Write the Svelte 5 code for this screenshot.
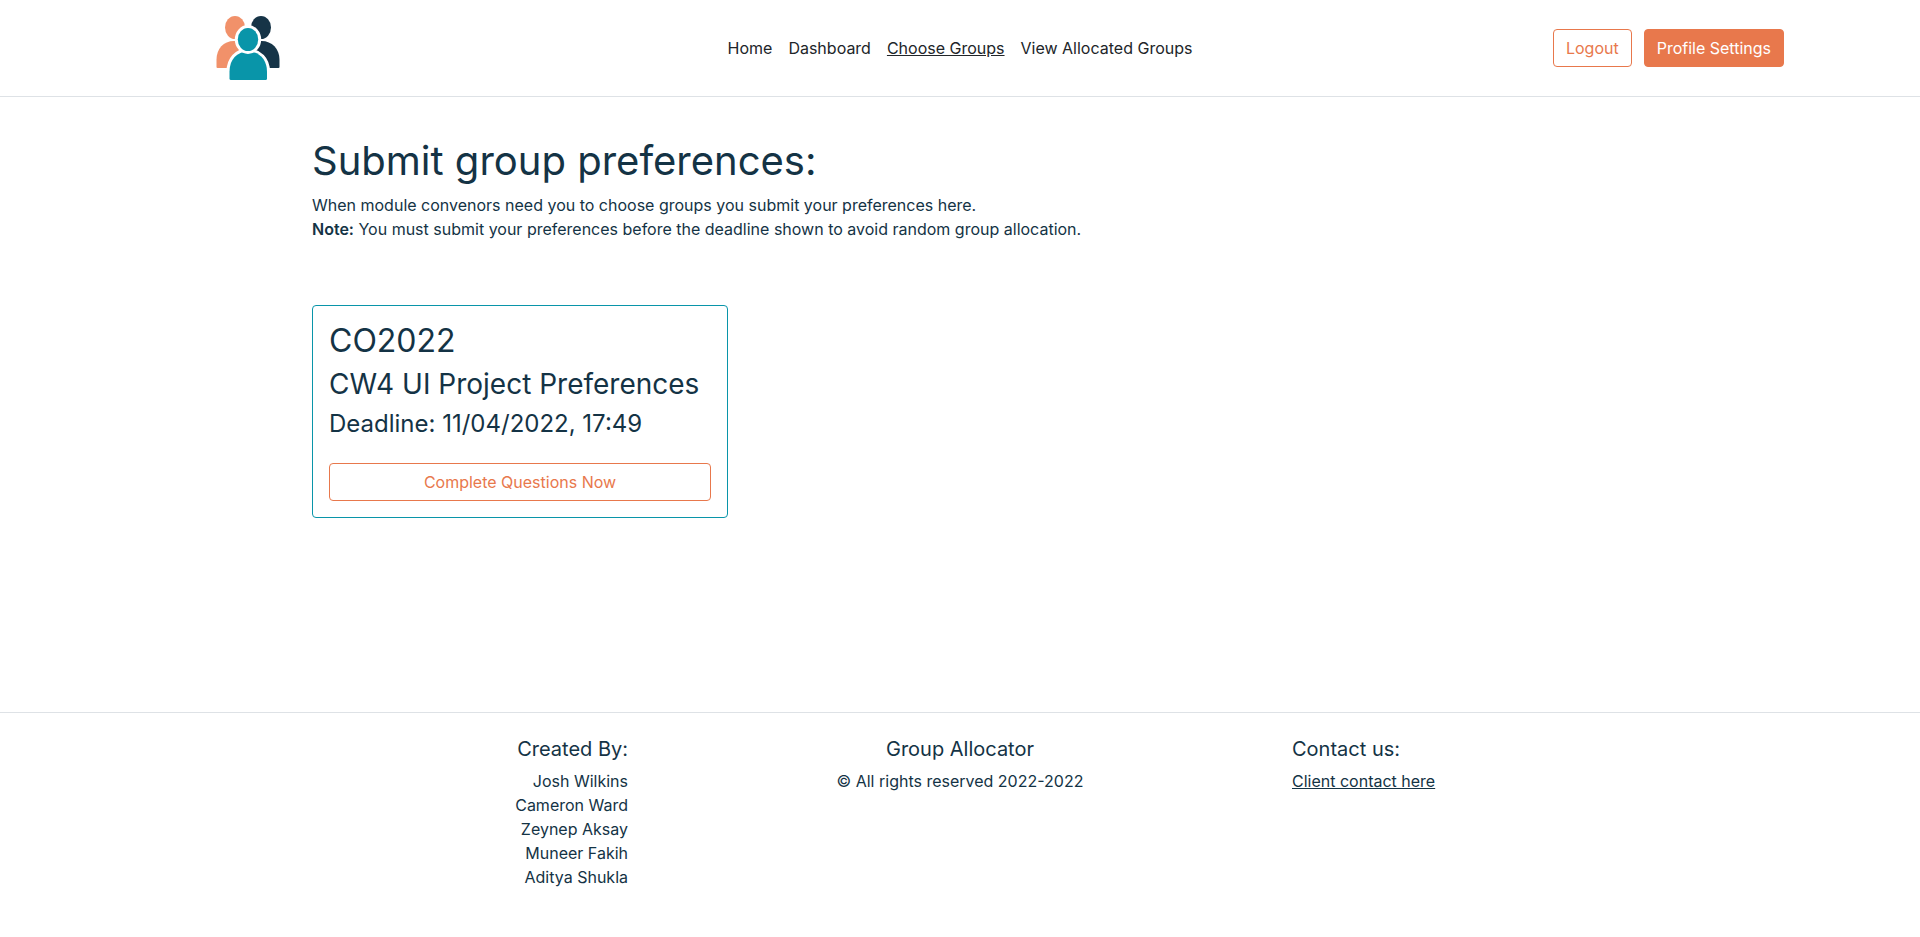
<script>
  const links = [
    { label: 'Home' },
    { label: 'Dashboard' },
    { label: 'Choose Groups', active: true },
    { label: 'View Allocated Groups' }
  ];
  const authors = ['Josh Wilkins', 'Cameron Ward', 'Zeynep Aksay', 'Muneer Fakih', 'Aditya Shukla'];
</script>

<div class="page">
  <header>
    <a class="brand" href="#home" aria-label="Group Allocator">
      <svg width="64" height="64" viewBox="0 0 64 64" aria-hidden="true">
        <g fill="#f1916a">
          <ellipse cx="19" cy="11.5" rx="10" ry="11.5" />
          <path d="M0.500 51V43.500C0.500 33 7.500 25 18 25C28 25 35 33 35 43.500V51a1 1 0 0 1-1 1H1.500a1 1 0 0 1-1-1Z" />
        </g>
        <g fill="#163447">
          <ellipse cx="45" cy="11.500" rx="10" ry="11.500" />
          <path d="M28 51V43.500C28 33 35 25 45.500 25C56 25 63.500 33 63.500 43.500V51a1 1 0 0 1-1 1H29a1 1 0 0 1-1-1Z" />
        </g>
        <g fill="#0995a9" stroke="#fff" stroke-width="6" paint-order="stroke">
          <path d="M13.500 62.500V55.500C13.500 43.500 21 35.500 32 35.500C43 35.500 51 43.500 51 55.500V62.500a1.500 1.500 0 0 1-1.500 1.500H15a1.500 1.500 0 0 1-1.500-1.500Z" />
          <ellipse cx="32" cy="23.500" rx="10.200" ry="11.500" />
        </g>
      </svg>
    </a>
    <nav aria-label="Main">
      {#each links as link}
        <a href="#{link.label}" class:active={link.active} aria-current={link.active ? 'page' : undefined}>{link.label}</a>
      {/each}
    </nav>
    <div class="actions">
      <button class="btn" type="button">Logout</button>
      <button class="btn solid" type="button">Profile Settings</button>
    </div>
  </header>

  <main>
    <h1>Submit group preferences:</h1>
    <p>
      When module convenors need you to choose groups you submit your preferences here.<br />
      <strong>Note:</strong> You must submit your preferences before the deadline shown to avoid random group allocation.
    </p>
    <div class="cards">
      <article class="card">
        <h2>CO2022</h2>
        <h3>CW4 UI Project Preferences</h3>
        <h4>Deadline: 11/04/2022, 17:49</h4>
        <button class="btn" type="button">Complete Questions Now</button>
      </article>
    </div>
  </main>

  <footer>
    <section class="credits">
      <h5>Created By:</h5>
      <ul>
        {#each authors as author}
          <li>{author}</li>
        {/each}
      </ul>
    </section>
    <section class="about">
      <h5>Group Allocator</h5>
      <p>© All rights reserved 2022-2022</p>
    </section>
    <section>
      <h5>Contact us:</h5>
      <a href="#contact">Client contact here</a>
    </section>
  </footer>
</div>

<style>
  :global(body) {
    margin: 0;
    background: #fff;
  }
  .page {
    display: flex;
    flex-direction: column;
    min-height: 100vh;
    font-family: Inter, sans-serif;
    font-size: 16px;
    font-weight: 400;
    line-height: 24px;
    color: #143345;
  }
  .page * {
    box-sizing: border-box;
  }
  header {
    display: grid;
    grid-template-columns: 1fr auto 1fr;
    align-items: center;
    padding: 16px 136px;
    border-bottom: 1px solid #dee2e6;
  }
  .brand {
    display: flex;
    padding-left: 80px;
  }
  nav {
    display: flex;
    flex-wrap: wrap;
  }
  nav a {
    padding: 8px;
    color: #212529;
    text-decoration: none;
  }
  nav a.active {
    text-decoration: underline;
  }
  .actions {
    display: flex;
    justify-content: flex-end;
    gap: 12px;
  }
  .btn {
    padding: 6px 12px;
    border: 1px solid #e8784c;
    border-radius: 4px;
    background: transparent;
    color: #e8784c;
    font: inherit;
    cursor: pointer;
  }
  .btn.solid {
    background: #e8784c;
    color: #fff;
  }
  h1, h2, h3, h4, h5 {
    margin: 0 0 8px;
    font-weight: 400;
    line-height: 1.2;
  }
  p {
    margin: 0;
  }
  main {
    flex: 1;
    width: 100%;
    max-width: 1320px;
    margin: 0 auto;
    padding: 40px 12px 64px;
  }
  h1 {
    font-size: 40px;
  }
  strong {
    font-weight: 600;
  }
  .cards {
    display: grid;
    grid-template-columns: repeat(3, 1fr);
    gap: 24px;
    margin-top: 64px;
  }
  .card {
    padding: 16px;
    border: 1px solid #0995a9;
    border-radius: 4px;
  }
  h2 {
    font-size: 32px;
  }
  h3 {
    font-size: 28px;
  }
  h4 {
    font-size: 24px;
  }
  .card .btn {
    width: 100%;
    margin-top: 16px;
  }
  footer {
    display: grid;
    grid-template-columns: repeat(3, 1fr);
    padding: 24px 0 48px;
    border-top: 1px solid #dee2e6;
  }
  footer section {
    padding: 0 12px;
  }
  h5 {
    font-size: 20px;
  }
  ul {
    margin: 0;
    padding: 0;
    list-style: none;
  }
  .credits {
    text-align: right;
  }
  .about {
    text-align: center;
  }
  footer a {
    color: inherit;
  }
</style>
